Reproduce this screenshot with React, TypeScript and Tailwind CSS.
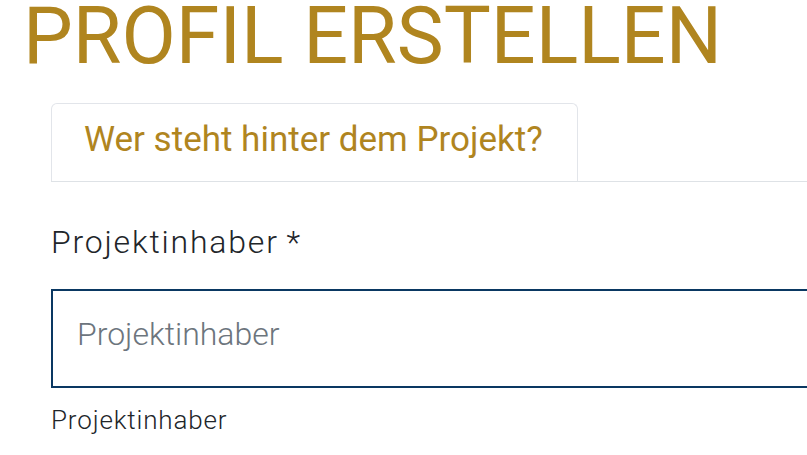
import { useState } from "react";

const GOLD = "text-[#b0851f]";

export default function App() {
  const [owner, setOwner] = useState("");

  return (
    <div className="w-screen min-h-screen overflow-hidden bg-white font-[family-name:Roboto,'Liberation_Sans',sans-serif]">
      <div className="w-[1100px] pl-[23px]">
        {/* Page title */}
        <h1 className={`text-[79px] leading-[73px] font-normal ${GOLD}`}>
          PROFIL ERSTELLEN
        </h1>

        <div className="pl-[28px]">
          {/* Tabs */}
          <div className="mt-[30px] flex border-b border-[#dee2e6]">
            <button
              type="button"
              className={`w-[527px] h-[78px] rounded-t-[6px] border border-b-0 border-[#e2e5ea] bg-white pl-[32px] pt-[10px] pb-[16px] text-left text-[35px] leading-[51px] font-normal ${GOLD}`}
            >
              Wer steht hinter dem Projekt?
            </button>
          </div>

          {/* Field */}
          <div className="mt-[38px] flex flex-col">
            <label
              htmlFor="owner"
              className="text-[32px] leading-[45px] font-light tracking-[1.8px] text-[#212529]"
            >
              Projektinhaber<span className="tracking-normal"> *</span>
            </label>
            <input
              id="owner"
              value={owner}
              onChange={(e) => setOwner(e.target.value)}
              placeholder="Projektinhaber"
              className="mt-[24px] h-[99px] w-full box-border border-2 border-[#0a3862] bg-white pl-[24px] pb-[9px] text-[32px] font-light text-[#212529] outline-none placeholder:text-[#6c757d]"
            />
            <p className="mt-[14px] text-[26px] leading-[37px] font-light tracking-[0.85px] text-[#212529]">
              Projektinhaber
            </p>
          </div>
        </div>
      </div>
    </div>
  );
}
